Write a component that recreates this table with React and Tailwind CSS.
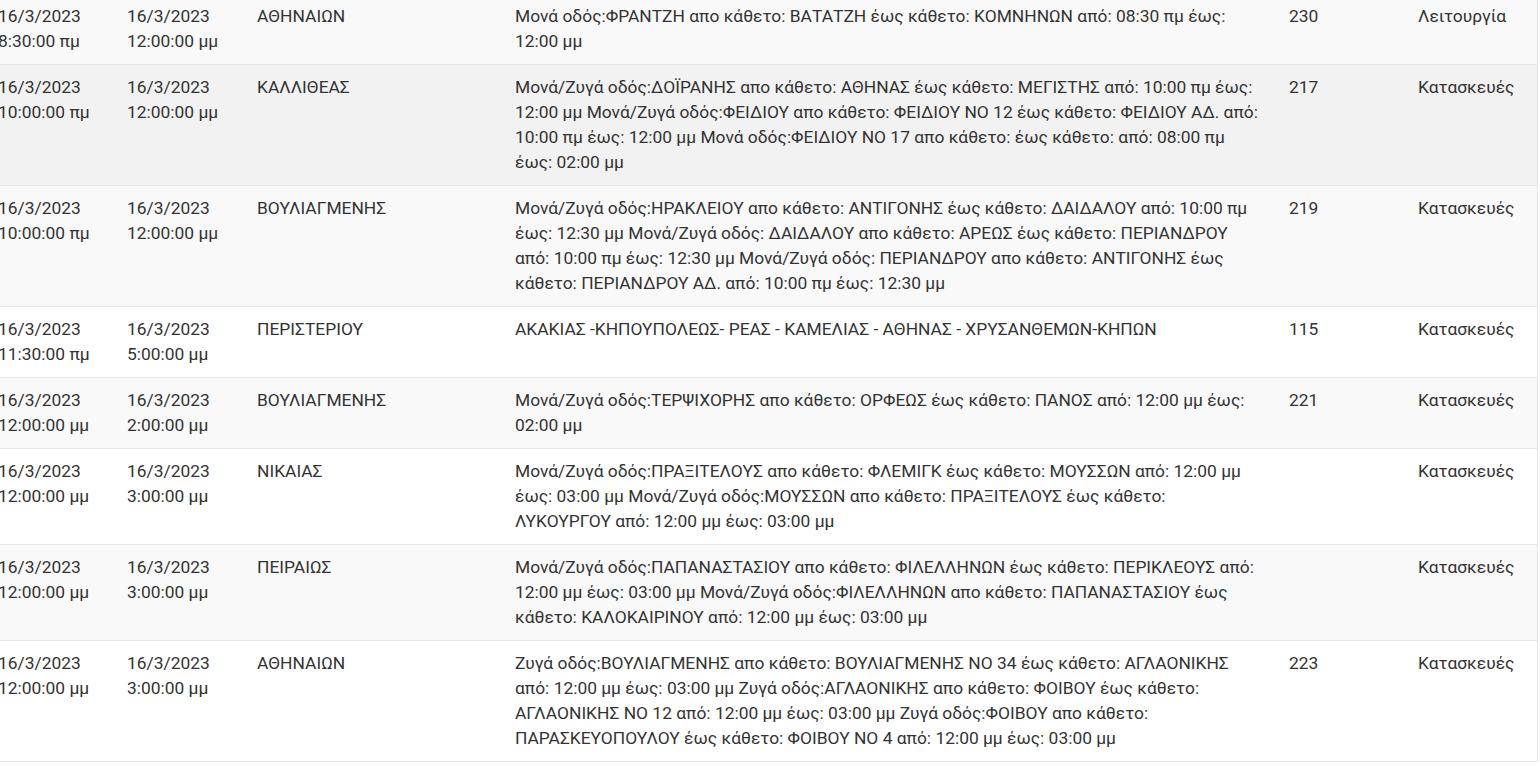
import React from "react";

// Roadworks / traffic closures table (scrolled view)
const rows = [
  {
    from: "16/3/2023 8:30:00 πμ",
    to: "16/3/2023 12:00:00 μμ",
    area: "ΑΘΗΝΑΙΩΝ",
    desc: "Μονά οδός:ΦΡΑΝΤΖΗ απο κάθετο: ΒΑΤΑΤΖΗ έως κάθετο: ΚΟΜΝΗΝΩΝ από: 08:30 πμ έως: 12:00 μμ",
    code: "230",
    type: "Λειτουργία",
    bg: "bg-[#f9f9f9]",
  },
  {
    from: "16/3/2023 10:00:00 πμ",
    to: "16/3/2023 12:00:00 μμ",
    area: "ΚΑΛΛΙΘΕΑΣ",
    desc: "Μονά/Ζυγά οδός:ΔΟΪΡΑΝΗΣ απο κάθετο: ΑΘΗΝΑΣ έως κάθετο: ΜΕΓΙΣΤΗΣ από: 10:00 πμ έως: 12:00 μμ Μονά/Ζυγά οδός:ΦΕΙΔΙΟΥ απο κάθετο: ΦΕΙΔΙΟΥ ΝΟ 12 έως κάθετο: ΦΕΙΔΙΟΥ ΑΔ. από: 10:00 πμ έως: 12:00 μμ Μονά οδός:ΦΕΙΔΙΟΥ ΝΟ 17 απο κάθετο: έως κάθετο: από: 08:00 πμ έως: 02:00 μμ",
    code: "217",
    type: "Κατασκευές",
    bg: "bg-[#f2f2f2]", // hovered row
  },
  {
    from: "16/3/2023 10:00:00 πμ",
    to: "16/3/2023 12:00:00 μμ",
    area: "ΒΟΥΛΙΑΓΜΕΝΗΣ",
    desc: "Μονά/Ζυγά οδός:ΗΡΑΚΛΕΙΟΥ απο κάθετο: ΑΝΤΙΓΟΝΗΣ έως κάθετο: ΔΑΙΔΑΛΟΥ από: 10:00 πμ έως: 12:30 μμ Μονά/Ζυγά οδός: ΔΑΙΔΑΛΟΥ απο κάθετο: ΑΡΕΩΣ έως κάθετο: ΠΕΡΙΑΝΔΡΟΥ από: 10:00 πμ έως: 12:30 μμ Μονά/Ζυγά οδός: ΠΕΡΙΑΝΔΡΟΥ απο κάθετο: ΑΝΤΙΓΟΝΗΣ έως κάθετο: ΠΕΡΙΑΝΔΡΟΥ ΑΔ. από: 10:00 πμ έως: 12:30 μμ",
    code: "219",
    type: "Κατασκευές",
    bg: "bg-[#f9f9f9]",
  },
  {
    from: "16/3/2023 11:30:00 πμ",
    to: "16/3/2023 5:00:00 μμ",
    area: "ΠΕΡΙΣΤΕΡΙΟΥ",
    desc: "ΑΚΑΚΙΑΣ -ΚΗΠΟΥΠΟΛΕΩΣ- ΡΕΑΣ - ΚΑΜΕΛΙΑΣ - ΑΘΗΝΑΣ - ΧΡΥΣΑΝΘΕΜΩΝ-ΚΗΠΩΝ",
    code: "115",
    type: "Κατασκευές",
    bg: "bg-white",
  },
  {
    from: "16/3/2023 12:00:00 μμ",
    to: "16/3/2023 2:00:00 μμ",
    area: "ΒΟΥΛΙΑΓΜΕΝΗΣ",
    desc: "Μονά/Ζυγά οδός:ΤΕΡΨΙΧΟΡΗΣ απο κάθετο: ΟΡΦΕΩΣ έως κάθετο: ΠΑΝΟΣ από: 12:00 μμ έως: 02:00 μμ",
    code: "221",
    type: "Κατασκευές",
    bg: "bg-[#f9f9f9]",
  },
  {
    from: "16/3/2023 12:00:00 μμ",
    to: "16/3/2023 3:00:00 μμ",
    area: "ΝΙΚΑΙΑΣ",
    desc: "Μονά/Ζυγά οδός:ΠΡΑΞΙΤΕΛΟΥΣ απο κάθετο: ΦΛΕΜΙΓΚ έως κάθετο: ΜΟΥΣΣΩΝ από: 12:00 μμ έως: 03:00 μμ Μονά/Ζυγά οδός:ΜΟΥΣΣΩΝ απο κάθετο: ΠΡΑΞΙΤΕΛΟΥΣ έως κάθετο: ΛΥΚΟΥΡΓΟΥ από: 12:00 μμ έως: 03:00 μμ",
    code: "",
    type: "Κατασκευές",
    bg: "bg-white",
  },
  {
    from: "16/3/2023 12:00:00 μμ",
    to: "16/3/2023 3:00:00 μμ",
    area: "ΠΕΙΡΑΙΩΣ",
    desc: "Μονά/Ζυγά οδός:ΠΑΠΑΝΑΣΤΑΣΙΟΥ απο κάθετο: ΦΙΛΕΛΛΗΝΩΝ έως κάθετο: ΠΕΡΙΚΛΕΟΥΣ από: 12:00 μμ έως: 03:00 μμ Μονά/Ζυγά οδός:ΦΙΛΕΛΛΗΝΩΝ απο κάθετο: ΠΑΠΑΝΑΣΤΑΣΙΟΥ έως κάθετο: ΚΑΛΟΚΑΙΡΙΝΟΥ από: 12:00 μμ έως: 03:00 μμ",
    code: "",
    type: "Κατασκευές",
    bg: "bg-[#f9f9f9]",
  },
  {
    from: "16/3/2023 12:00:00 μμ",
    to: "16/3/2023 3:00:00 μμ",
    area: "ΑΘΗΝΑΙΩΝ",
    desc: "Ζυγά οδός:ΒΟΥΛΙΑΓΜΕΝΗΣ απο κάθετο: ΒΟΥΛΙΑΓΜΕΝΗΣ ΝΟ 34 έως κάθετο: ΑΓΛΑΟΝΙΚΗΣ από: 12:00 μμ έως: 03:00 μμ Ζυγά οδός:ΑΓΛΑΟΝΙΚΗΣ απο κάθετο: ΦΟΙΒΟΥ έως κάθετο: ΑΓΛΑΟΝΙΚΗΣ ΝΟ 12 από: 12:00 μμ έως: 03:00 μμ Ζυγά οδός:ΦΟΙΒΟΥ απο κάθετο: ΠΑΡΑΣΚΕΥΟΠΟΥΛΟΥ έως κάθετο: ΦΟΙΒΟΥ ΝΟ 4 από: 12:00 μμ έως: 03:00 μμ",
    code: "223",
    type: "Κατασκευές",
    bg: "bg-white",
  },
];

function App() {
  return (
    <div className="w-[1540px] h-[766px] overflow-hidden bg-white font-['Roboto','Liberation_Sans',sans-serif] text-[17.4px] leading-[25px] text-[#333]">
      {/* table is scrolled slightly: shift up/left */}
      <div className="-mt-[7px] -ml-[14px] w-[1552px] border-r border-b border-[#e6e6e6]">
        <table className="w-[1551px] table-fixed border-collapse">
          <colgroup>
            <col className="w-[129px]" />
            <col className="w-[130px]" />
            <col className="w-[258px]" />
            <col className="w-[774px]" />
            <col className="w-[129px]" />
            <col className="w-[131px]" />
          </colgroup>
          <tbody>
            {rows.map((r, i) => (
              <tr key={i} className={`${r.bg} border-t border-[#e6e6e6]`}>
                <td className="align-top px-3 py-[10px]">{r.from}</td>
                <td className="align-top px-3 py-[10px]">{r.to}</td>
                <td className="align-top px-3 py-[10px]">{r.area}</td>
                <td className="align-top px-3 py-[10px]">{r.desc}</td>
                <td className="align-top px-3 py-[10px]">{r.code}</td>
                <td className="align-top px-3 py-[10px]">{r.type}</td>
              </tr>
            ))}
          </tbody>
        </table>
      </div>
    </div>
  );
}

export default App;
